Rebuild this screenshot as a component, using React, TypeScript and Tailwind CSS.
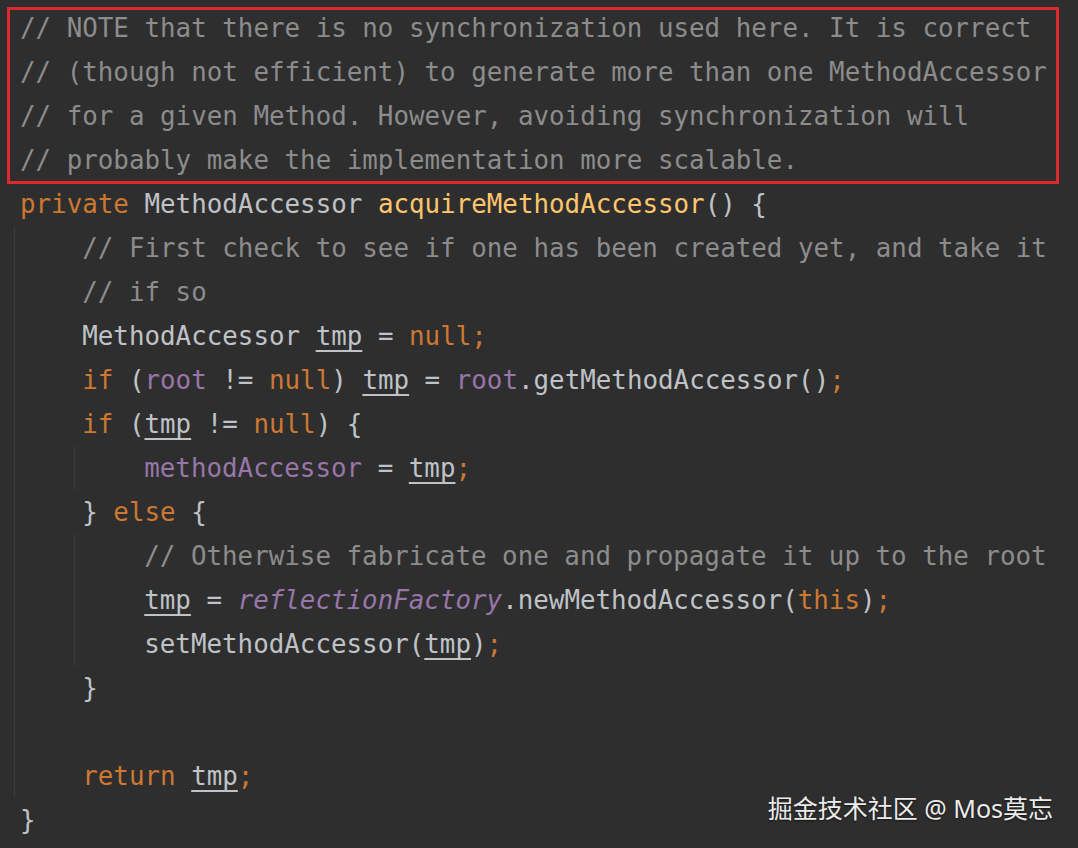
import React from "react";

const C = {
    text: "text-[#bfc2c7]",
    comment: "text-[#8c8c8c]",
    kw: "text-[#cc7832]",
    decl: "text-[#ffc66d]",
    field: "text-[#9876aa]",
};

type Tok = [string, string?];

function Line({ toks }: { toks: Tok[] }) {
    return (
        <div className="h-[44px] leading-[44px] whitespace-pre">
            {toks.map(([t, cls], i) => (
                <span key={i} className={cls ?? C.text}>
                    {t}
                </span>
            ))}
        </div>
    );
}

const tmp: Tok = ["tmp", `${C.text} underline decoration-[1.5px] underline-offset-[5px]`];

export default function App() {
    return (
        <div className="relative w-[1078px] h-[848px] overflow-hidden bg-[#2e2e2e]">
            <div
                className="pt-[6px] pl-[20px] text-[25.85px]"
                style={{ fontFamily: '"DejaVu Sans Mono", "Liberation Mono", monospace' }}
            >
                {/* highlighted comment block */}
                <div className="relative">
                    <span className="absolute left-[-13px] top-[1px] w-[1052px] h-[177px] border-[3px] border-[#dc2a2c]" />
                    <Line toks={[["// NOTE that there is no synchronization used here. It is correct", C.comment]]} />
                    <Line toks={[["// (though not efficient) to generate more than one MethodAccessor", C.comment]]} />
                    <Line toks={[["// for a given Method. However, avoiding synchronization will", C.comment]]} />
                    <Line toks={[["// probably make the implementation more scalable.", C.comment]]} />
                </div>

                <Line
                    toks={[
                        ["private ", C.kw],
                        ["MethodAccessor "],
                        ["acquireMethodAccessor", C.decl],
                        ["() {"],
                    ]}
                />

                {/* method body */}
                <div className="ml-[-6px] border-l border-[#3c3c3c] pl-[5px]">
                    <Line toks={[["    // First check to see if one has been created yet, and take it", C.comment]]} />
                    <Line toks={[["    // if so", C.comment]]} />
                    <Line toks={[["    MethodAccessor "], tmp, [" = "], ["null", C.kw], [";", C.kw]]} />
                    <Line
                        toks={[
                            ["    "],
                            ["if ", C.kw],
                            ["("],
                            ["root", C.field],
                            [" != "],
                            ["null", C.kw],
                            [") "],
                            tmp,
                            [" = "],
                            ["root", C.field],
                            [".getMethodAccessor()"],
                            [";", C.kw],
                        ]}
                    />
                    <Line toks={[["    "], ["if ", C.kw], ["("], tmp, [" != "], ["null", C.kw], [") {"]]} />
                    <div className="ml-[54px] border-l border-[#3c3c3c] pl-[7px]">
                        <Line toks={[["    "], ["methodAccessor", C.field], [" = "], tmp, [";", C.kw]]} />
                    </div>
                    <Line toks={[["    } "], ["else", C.kw], [" {"]]} />
                    <div className="ml-[54px] border-l border-[#3c3c3c] pl-[7px]">
                        <Line toks={[["    // Otherwise fabricate one and propagate it up to the root", C.comment]]} />
                        <Line
                            toks={[
                                ["    "],
                                tmp,
                                [" = "],
                                ["reflectionFactory", `${C.field} italic`],
                                [".newMethodAccessor("],
                                ["this", C.kw],
                                [")"],
                                [";", C.kw],
                            ]}
                        />
                        <Line toks={[["    setMethodAccessor("], tmp, [")"], [";", C.kw]]} />
                    </div>
                    <Line toks={[["    }"]]} />
                    <Line toks={[[" "]]} />
                    <Line toks={[["    "], ["return ", C.kw], tmp, [";", C.kw]]} />
                </div>
                <Line toks={[["}"]]} />
            </div>

            {/* watermark */}
            <div
                className="absolute right-[25px] top-[791px] text-[25px] leading-[34px] text-[#ececec] [text-shadow:0_1px_2px_rgba(0,0,0,0.6)]"
                style={{ fontFamily: '"Noto Sans", "Noto Sans CJK SC", sans-serif' }}
            >
                掘金技术社区 @ Mos莫忘
            </div>
        </div>
    );
}
